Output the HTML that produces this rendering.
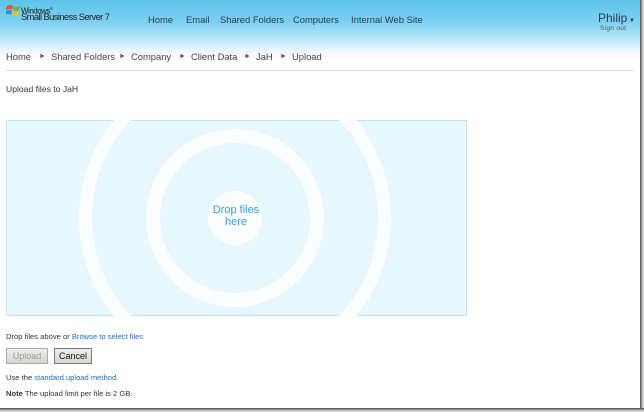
<!DOCTYPE html>
<html><head><meta charset="utf-8"><style>
*{margin:0;padding:0;box-sizing:border-box}
body{width:644px;height:412px;overflow:hidden;background:#fff;font-family:"Liberation Sans",sans-serif;position:relative}
#page{position:absolute;left:0;top:0;width:640px;height:408px;background:#fff;overflow:hidden}
#hdr{position:absolute;left:0;top:0;width:640px;height:70px;background:linear-gradient(to bottom,#5ec3ec 0px,#7dd1f2 22px,#b8e6f8 38px,#e8f7fd 50px,#fff 60px)}
.t{position:absolute;white-space:nowrap}
.nav{font-size:9.4px;color:#2a3b4a;top:14px}
.bc{font-size:9.4px;color:#444;top:51px}
.ar{font-size:7px;color:#555;top:53px}
a{color:#1a6fc9;text-decoration:none}
.btn{position:absolute;height:16px;border:1px solid #777;background:linear-gradient(#f0efeb,#d8d6cf);font-size:9px;text-align:center;line-height:14px}
.sm{font-size:7.6px;color:#333}
</style></head><body>
<div id="page">
<div id="hdr"></div>
<svg style="position:absolute;left:6px;top:4px" width="15" height="14" viewBox="0 0 15 14">
<path d="M1 2 Q4 0 7 2 L6 6 Q3 4 0 6Z" fill="#e8502a"/>
<path d="M8 2 Q11 4 14 2 L13 6 Q10 8 7 6Z" fill="#6cb33f"/>
<path d="M0 7 Q3 5 6 7 L5 11 Q2 9 -1 11Z" fill="#2f8fd8"/>
<path d="M7 7 Q10 9 13 7 L12 11 Q9 13 6 11Z" fill="#f5c21b"/>
</svg>
<div class="t" style="left:21px;top:5px;font-size:8px;color:#222;letter-spacing:-0.5px;line-height:8px">Windows<sup style="font-size:4px">®</sup></div>
<div class="t" style="left:21px;top:12px;font-size:9.4px;color:#222;letter-spacing:-0.6px;line-height:9px">Small Business Server 7</div>
<div class="t nav" style="left:148px">Home</div>
<div class="t nav" style="left:186px">Email</div>
<div class="t nav" style="left:220px">Shared Folders</div>
<div class="t nav" style="left:293px">Computers</div>
<div class="t nav" style="left:351px">Internal Web Site</div>
<div class="t" style="left:598px;top:11px;font-size:12px;color:#2a3b4a">Philip<span style="font-size:6px"> ▼</span></div>
<div class="t" style="left:600px;top:25px;font-size:6.5px;color:#4a5a66;letter-spacing:0.3px">Sign out</div>
<div class="t bc" style="left:6px">Home</div><div class="t ar" style="left:39px">►</div>
<div class="t bc" style="left:51px">Shared Folders</div><div class="t ar" style="left:119px">►</div>
<div class="t bc" style="left:131px">Company</div><div class="t ar" style="left:179px">►</div>
<div class="t bc" style="left:191px">Client Data</div><div class="t ar" style="left:244px">►</div>
<div class="t bc" style="left:256px">JaH</div><div class="t ar" style="left:280px">►</div>
<div class="t bc" style="left:292px">Upload</div>
<div style="position:absolute;left:6px;top:70px;width:627px;height:1px;background:#d8d8d8"></div>
<div class="t" style="left:6px;top:84px;font-size:8.6px;color:#333">Upload files to JaH</div>
<svg style="position:absolute;left:6px;top:120px" width="461" height="196" viewBox="0 0 461 196">
<rect x="0.5" y="0.5" width="460" height="195" fill="#e6f7fd" stroke="#c5e4ee"/>
<circle cx="229" cy="98" r="149.5" fill="none" stroke="#fafeff" stroke-width="13"/>
<circle cx="229" cy="98" r="82" fill="none" stroke="#fafeff" stroke-width="14"/>
<circle cx="229" cy="98" r="27" fill="#fafeff"/>
<text x="230" y="93" font-size="11" fill="#3a9ae0" text-anchor="middle" font-family="Liberation Sans">Drop files</text>
<text x="230" y="105" font-size="11" fill="#3a9ae0" text-anchor="middle" font-family="Liberation Sans">here</text>
</svg>
<div class="t sm" style="left:6px;top:332px">Drop files above or <a>Browse to select files</a></div>
<div class="btn" style="left:6px;top:348px;width:42px;color:#999;border-color:#aaa">Upload</div>
<div class="btn" style="left:54px;top:348px;width:38px;color:#111">Cancel</div>
<div class="t sm" style="left:6px;top:373px">Use the <a>standard upload method.</a></div>
<div class="t sm" style="left:6px;top:389px"><b>Note</b> The upload limit per file is 2 GB.</div>
</div>
<div style="position:absolute;left:640px;top:0;width:4px;height:412px;background:linear-gradient(to right,#444,#aaa,#eee)"></div>
<div style="position:absolute;left:0;top:408px;width:644px;height:4px;background:linear-gradient(#444,#aaa,#eee)"></div>
</body></html>
